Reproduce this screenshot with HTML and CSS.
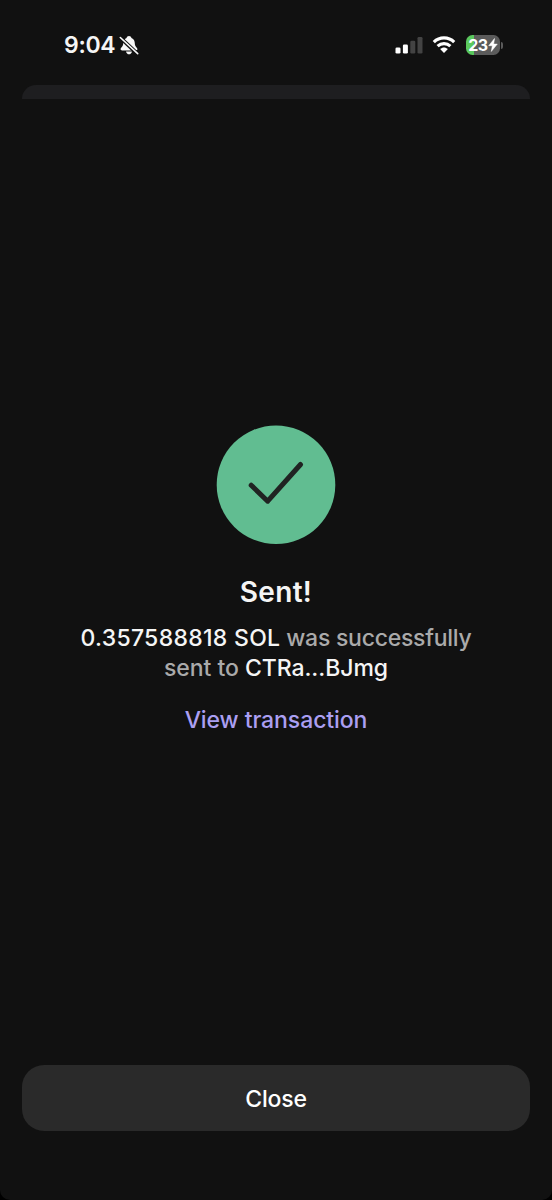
FILE: index.html
```html
<!DOCTYPE html>
<html lang="en">
<head>
<meta charset="utf-8">
<title>Sent</title>
<link rel="stylesheet" href="styles.css">
</head>
<body>
<div class="screen">
  <header class="status">
    <div class="status-left">
      <span class="time">9:04</span>
      <svg class="bell" width="20" height="20" viewBox="0 0 20 20">
        <path d="M10 1C8.700 1 7.800 1.800 7.500 2.900C5 3.900 4.200 6.200 4.200 8.600C4.200 11.700 1.600 12.700 1.600 14.300C1.600 14.900 2.200 15.500 3.100 15.500H16.900C17.800 15.500 18.400 14.900 18.400 14.300C18.400 12.700 15.800 11.700 15.800 8.600C15.800 6.200 15 3.900 12.500 2.900C12.200 1.800 11.300 1 10 1Z" fill="#f8f8f8"/>
        <path d="M7 16.500H13C12.600 18.400 11.400 19.300 10 19.300S7.400 18.400 7 16.500Z" fill="#f8f8f8"/>
        <path d="M1.300 2.700L18.300 18.700" stroke="#111" stroke-width="3.800"/>
        <path d="M1.300 2.500L18.700 18.700" stroke="#f8f8f8" stroke-width="1.600" stroke-linecap="round"/>
      </svg>
    </div>
    <div class="status-right">
      <svg width="28" height="18" viewBox="0 0 28 18">
        <rect x="0.500" y="11.500" width="5" height="6" rx="1.300" fill="#fff"/>
        <rect x="7.900" y="8.500" width="5" height="9" rx="1.300" fill="#fff"/>
        <rect x="15.300" y="4.800" width="5" height="12.700" rx="1.300" fill="#434343"/>
        <rect x="22.500" y="1" width="5" height="16.500" rx="1.300" fill="#434343"/>
      </svg>
      <svg class="wifi" width="24" height="18" viewBox="0 0 24 18">
        <path d="M1.800 6.100C7.600 .5 16.400 .5 22.200 6.100" fill="none" stroke="#fff" stroke-width="3.200"/>
        <path d="M5.600 10.100C9.300 6.700 14.700 6.700 18.400 10.100" fill="none" stroke="#fff" stroke-width="3.200"/>
        <path d="M8.100 13.100C10.500 11 13.500 11 15.900 13.100L12 17.100Z" fill="#fff"/>
      </svg>
      <div class="battery">
        <span class="level">23</span>
        <svg width="10" height="14" viewBox="0 0 10 14"><path d="M6.500 .5L.7 7.700H4.300L3.300 13.500L9.300 6.100H5.700Z" fill="#fff" stroke="#fff" stroke-width=".5" stroke-linejoin="round"/></svg>
      </div>
      <span class="battery-tip"></span>
    </div>
  </header>
  <div class="sheet-edge"></div>
  <main class="content">
    <svg class="success" width="120" height="120" viewBox="0 0 120 120">
      <circle cx="60" cy="59.700" r="59.300" fill="#61bd91"/>
      <path d="M35.200 60.200L51.700 76.200L84.500 39.500" fill="none" stroke="#202322" stroke-width="5" stroke-linecap="round" stroke-linejoin="round"/>
    </svg>
    <h1 class="title">Sent!</h1>
    <p class="message"><span class="line line-amount"><b>0.357588818 SOL</b> was successfully</span><span class="line line-address">sent to <b>CTRa...BJmg</b></span></p>
    <a class="link">View transaction</a>
  </main>
  <button class="close"><span>Close</span></button>
</div>
</body>
</html>
```
FILE: styles.css
```css
* { box-sizing: border-box; }
body { margin: 0; background: #000; }
.screen {
  width: 552px;
  height: 1200px;
  padding: 0 22px;
  display: flex;
  flex-direction: column;
  background: #111;
  border-radius: 0 0 10px 10px;
  font-family: Inter, "Liberation Sans", sans-serif;
  color: #f5f5f5;
}
.status {
  height: 85px;
  padding: 31px 27px 0 42px;
  display: flex;
  justify-content: space-between;
  align-items: flex-start;
}
.status-left { display: flex; align-items: center; height: 28px; gap: 4px; }
.time { font-size: 23px; font-weight: 600; line-height: 28px; letter-spacing: -0.3px; }
.status-right { display: flex; align-items: center; height: 28px; }
.wifi { margin-left: 9px; }
.battery {
  width: 34px;
  height: 20px;
  margin-left: 10px;
  border-radius: 6.500px;
  background: linear-gradient(90deg, #5ac85d 8px, #5b5b5b 8px);
  display: flex;
  align-items: center;
  justify-content: center;
}
.level { font-size: 16px; line-height: 20px; font-weight: 700; letter-spacing: -0.4px; color: #fff; }
.battery-tip { width: 2px; height: 7px; margin-left: 1px; border-radius: 0 2px 2px 0; background: #5b5b5b; }
.sheet-edge { height: 14px; border-radius: 14px 14px 0 0; background: #1e1e20; }
.content { flex: 1; padding-top: 326px; display: flex; flex-direction: column; align-items: center; }
.success { display: block; }
.title { margin: 29px 0 0; font-size: 28px; line-height: 36px; font-weight: 600; letter-spacing: 0.3px; }
.message { margin: 13px 0 0; font-size: 23px; line-height: 30px; font-weight: 500; color: #aaa; text-align: center; }
.message b { font-weight: 500; color: #f5f5f5; }
.line { display: block; white-space: nowrap; }
.line-amount { letter-spacing: -0.25px; }
.line-amount b { letter-spacing: 0.3px; }
.line-address { letter-spacing: -0.05px; }
.link { margin-top: 22px; font-size: 23px; line-height: 30px; font-weight: 500; letter-spacing: -0.08px; color: #ab9ff2; }
.close {
  height: 66px;
  margin: 0 0 69px;
  padding: 2px 0 0;
  border: 0;
  border-radius: 22px;
  background: #2a2a2a;
  color: #fff;
  font: 500 23px/64px Inter, "Liberation Sans", sans-serif;
  letter-spacing: -0.2px;
}
```
